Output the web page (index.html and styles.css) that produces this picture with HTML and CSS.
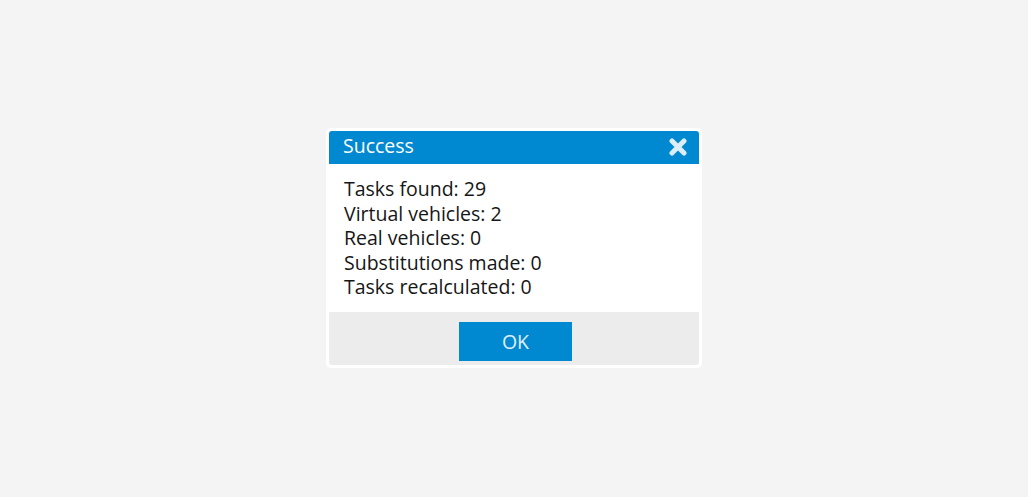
FILE: index.html
```html
<!DOCTYPE html>
<html>
<head>
<meta charset="utf-8">
<link rel="stylesheet" href="styles.css">
</head>
<body>
<div class="page">
  <div class="dialog">
    <div class="header">
      <span class="title">Success</span>
      <span class="close">
        <svg width="18" height="18" viewBox="0 0 18 18"><path d="M3 3 L15 15 M15 3 L3 15" stroke="#dcedf8" stroke-width="5" stroke-linecap="round"/></svg>
      </span>
    </div>
    <div class="body">
      <div>Tasks found: 29</div>
      <div>Virtual vehicles: 2</div>
      <div>Real vehicles: 0</div>
      <div>Substitutions made: 0</div>
      <div>Tasks recalculated: 0</div>
    </div>
    <div class="footer">
      <button class="ok">OK</button>
    </div>
  </div>
</div>
</body>
</html>
```
FILE: styles.css
```css
html, body {
  margin: 0;
  padding: 0;
  background: #f4f4f4;
  font-family: "Open Sans", "Noto Sans", sans-serif;
}
.page {
  width: 1028px;
  height: 497px;
  display: flex;
  justify-content: center;
  align-items: flex-start;
}
.dialog {
  margin-top: 128px;
  width: 370px;
  background: #fff;
  border: 3px solid #fff;
  border-radius: 5px;
}
.header {
  height: 33px;
  background: #0088d1;
  border-radius: 3px 3px 0 0;
  display: flex;
  align-items: center;
  justify-content: space-between;
  padding: 0 12px 0 14px;
}
.title {
  color: #fff;
  font-size: 19.5px;
  line-height: 24px;
  margin-top: -3px;
}
.close {
  display: flex;
  margin-top: -2px;
}
.body {
  padding: 13px 15px 12px 15px;
  font-size: 19.5px;
  line-height: 24.5px;
  color: #161616;
}
.footer {
  background: #ececec;
  height: 53px;
  display: flex;
  justify-content: center;
  align-items: flex-start;
  border-radius: 0 0 3px 3px;
}
.ok {
  margin-top: 10px;
  margin-left: 3px;
  width: 113px;
  height: 39px;
  background: #0088d1;
  border: none;
  color: #e0f0fa;
  font-family: "Open Sans", "Noto Sans", sans-serif;
  font-size: 19.5px;
  padding: 0;
}
```
